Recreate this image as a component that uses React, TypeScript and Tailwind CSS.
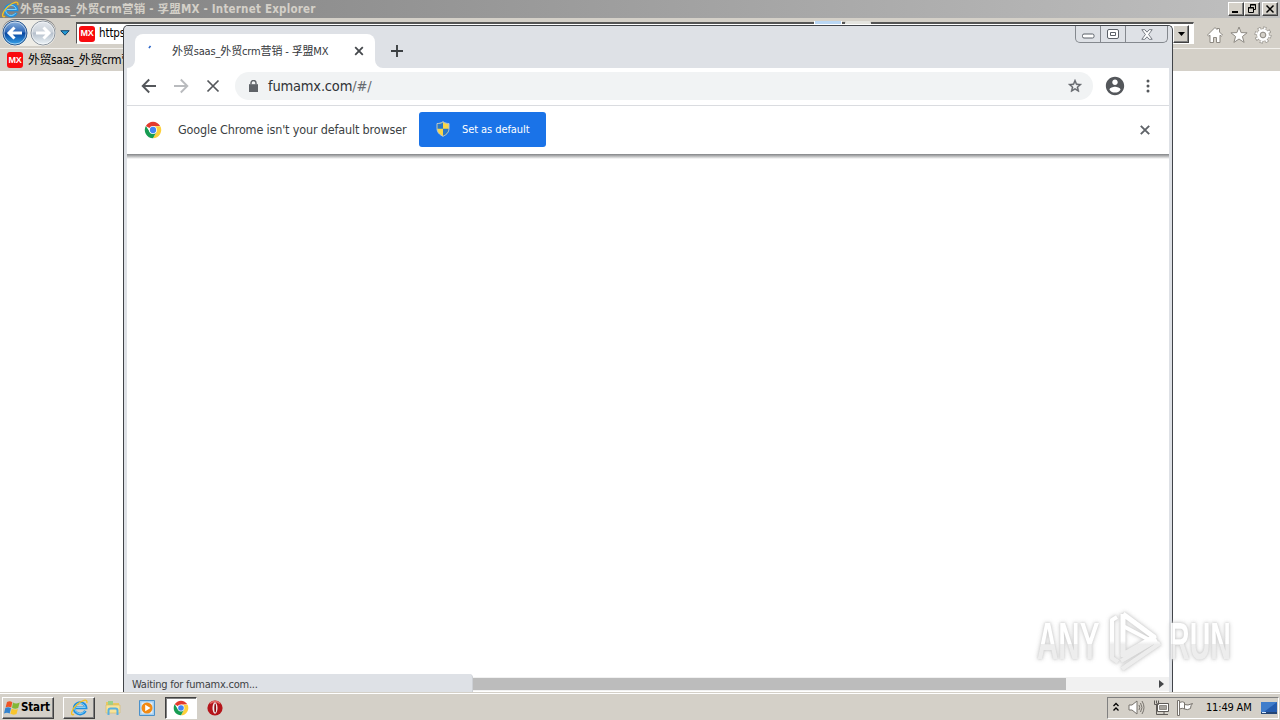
import type { ReactNode } from 'react';

const UI_FONT = "font-['DejaVu_Sans_Condensed','DejaVu_Sans','Noto_Sans_CJK_SC',sans-serif]";

function IeLogo({ className }: { className: string }) {
  return (
    <svg className={className} viewBox="0 0 20 20" fill="none">
      <path d="M17 14a7 6.700 0 1 1 .7-3.500H5.500" stroke="#1e8fe0" strokeWidth="3.200" />
      <path d="M16.200 14a6.300 6 0 1 1 .7-4H6" stroke="#8ad6fb" strokeWidth="1.100" />
      <path d="M3.600 18.200C-1.500 20 .5 12.500 6.500 7S19.800-1.300 18.600 4.700" stroke="#f4c022" strokeWidth="1.600" />
    </svg>
  );
}

function ChromeLogo({ className }: { className: string }) {
  return (
    <svg className={className} viewBox="0 0 24 24">
      <path d="M12 12 2.500 6.500A11 11 0 0 1 21.500 6.500L12 7z" fill="#e33b2e" />
      <path d="M12 7h9.800A11 11 0 0 1 12 23l4.500-8.500z" fill="#fdd03b" />
      <path d="M2.500 6.500A11 11 0 0 0 12 23l4.500-8.500-8.800 0z" fill="#179c52" />
      <circle cx="12" cy="12" r="5.200" fill="#fff" />
      <circle cx="12" cy="12" r="4.200" fill="#4285f4" />
    </svg>
  );
}

function MxIcon() {
  return (
    <span className="flex h-4 w-4 shrink-0 items-center justify-center rounded-[3px] bg-[#f90a0e] font-['Liberation_Sans',sans-serif] text-[9px] font-bold leading-none tracking-[-0.3px] text-white">
      MX
    </span>
  );
}

function CaptionButton({ children }: { children: ReactNode }) {
  return (
    <button className="flex h-[14px] w-4 items-center justify-center border border-t-white border-r-[#404040] border-b-[#404040] border-l-white bg-[#d4d0c8] shadow-[inset_-1px_-1px_0_#808080]">
      <svg className="h-3 w-3" viewBox="0 0 12 12" fill="none" stroke="#000">
        {children}
      </svg>
    </button>
  );
}

function NavOrb({ forward = false }: { forward?: boolean }) {
  return (
    <svg className="h-[26px] w-[26px] shrink-0" viewBox="0 0 26 26">
      <defs>
        <linearGradient id={forward ? 'fwd' : 'back'} x1="0" y1="0" x2="0" y2="1">
          <stop offset="0" stopColor={forward ? '#e4e8ee' : '#8fb5df'} />
          <stop offset="0.46" stopColor={forward ? '#cbd2da' : '#2f68b8'} />
          <stop offset="0.5" stopColor={forward ? '#b5bfcb' : '#08459f'} />
          <stop offset="1" stopColor={forward ? '#eff6fa' : '#38a6ec'} />
        </linearGradient>
      </defs>
      <circle cx="13" cy="13" r="12" fill={forward ? 'url(#fwd)' : 'url(#back)'} stroke={forward ? '#8c959f' : '#29578f'} />
      <circle cx="13" cy="13" r="11" fill="none" stroke="#fff" strokeOpacity=".55" />
      <path
        d={forward ? 'M6 13h12M13.500 7.500 19 13l-5.500 5.500' : 'M20 13H8M12.500 7.500 7 13l5.500 5.500'}
        fill="none"
        stroke="#fff"
        strokeWidth="3"
      />
    </svg>
  );
}

function ExplorerWindow() {
  return (
    <div className="h-[692px] bg-white">
      <div className="flex h-[18px] items-center bg-gradient-to-r from-[#808080] to-[#c0c0c0] pl-[2px] pr-[2px]">
        <IeLogo className="h-[17px] w-[17px] shrink-0" />
        <div className="ml-[1px] w-[310px] whitespace-nowrap text-[11.500px] font-bold leading-[18px] tracking-[0.21px] text-[#d4d0c8]">
          外贸saas_外贸crm营销 - 孚盟MX - Internet Explorer
        </div>
        <div className="ml-auto flex">
          <CaptionButton><path d="M2 9h6" strokeWidth="2" /></CaptionButton>
          <CaptionButton>
            <path d="M4.500 4V1.500h5v5H7M4 2h6" />
            <path d="M2.500 4.500h5v5h-5zM2 5h6" />
          </CaptionButton>
          <div className="w-[2px]" />
          <CaptionButton><path d="m2.500 2.500 7 7m0-7-7 7" strokeWidth="1.500" /></CaptionButton>
        </div>
      </div>
      <div className="flex h-[30px] items-center bg-[#d4d0c8] pl-[2px]">
        <div className="flex w-[54px] items-center gap-[2px] rounded-full bg-[#eeece6] shadow-[0_-1px_0_#77777a]">
          <NavOrb />
          <NavOrb forward />
        </div>
        <svg className="ml-1 h-[6px] w-[10px]" viewBox="0 0 10 6">
          <path d="M.8.700h8.400L5 5.200z" fill="#229ad5" stroke="#16456c" />
        </svg>
        <div className="ml-[6px] flex h-[22px] w-[1118px] items-center border border-t-2 border-[#555] border-r-white border-b-white bg-white pl-[2px]">
          <MxIcon />
          <span className="ml-1 w-6 text-[11.500px] leading-none tracking-[-0.1px] text-black">https</span>
          <div className="-mt-[22px] ml-[691px] h-[3px] w-[28px] border-x border-white bg-[#bad7f4]" />
          <div className="-mt-[22px] ml-[3px] h-[3px] w-[26px] rounded-t-[2px] bg-[#e4e4df]" />
          <span className="ml-auto mr-[4px] flex h-[18px] w-4 items-center justify-center border border-t-white border-r-[#404040] border-b-[#404040] border-l-white bg-[#d4d0c8] shadow-[inset_-1px_-1px_0_#808080]">
            <svg className="h-1 w-[7px]" viewBox="0 0 7 4"><path d="M0 0h7L3.500 4z" /></svg>
          </span>
        </div>
        <div className="ml-[12px] mt-1 flex items-center gap-[6px]">
          <svg className="h-[18px] w-[18px]" viewBox="0 0 18 18">
            <path d="M1.500 9 9 1.500l2 2V2.500h2.500V6l3 3-1.200 1.200-1.300-1V16.500h-3.500v-5h-3v5H4V9.200l-1.300 1z" fill="#fff" stroke="#8d8982" />
          </svg>
          <svg className="h-[18px] w-[18px]" viewBox="0 0 18 18">
            <path d="m9 1 2.100 5.600 6 .2-4.700 3.700 1.700 5.900L9 13l-5.100 3.400 1.700-5.900L.900 6.800l6-.2z" fill="#fff" stroke="#8d8982" />
          </svg>
          <svg className="h-[18px] w-[18px]" viewBox="0 0 18 18" fill="none">
            <circle cx="9" cy="9" r="6.900" stroke="#8d8982" strokeWidth="3.200" strokeDasharray="3.000 2.419" />
            <circle cx="9" cy="9" r="5" fill="#fff" stroke="#8d8982" strokeWidth="3" />
            <circle cx="9" cy="9" r="6.700" stroke="#fff" strokeWidth="2.200" strokeDasharray="2.000 3.262" strokeDashoffset="-.5" />
            <circle cx="9" cy="9" r="4.600" stroke="#fff" strokeWidth="2.800" />
            <circle cx="9" cy="9" r="2.800" fill="#d4d0c8" stroke="#8d8982" />
          </svg>
        </div>
      </div>
      <div className="flex h-[23px] items-center border-t border-[#f2f0ec] bg-[#d4d0c8] pl-[7px]">
        <MxIcon />
        <span className="ml-[5px] whitespace-nowrap text-[12px] leading-none tracking-[-0.450px] text-black">外贸saas_外贸crm营销</span>
      </div>
    </div>
  );
}

function TabStrip() {
  return (
    <div className="flex h-[42px] items-end bg-[#dee1e6] pl-px">
      <svg className="h-2 w-2 shrink-0" viewBox="0 0 8 8"><path d="M8 0v8H0a8 8 0 0 0 8-8" fill="#fff" /></svg>
      <div className="flex h-[34px] w-[240px] shrink-0 items-center rounded-t-lg bg-white">
        <svg className="-mt-[8px] ml-[13px] h-1 w-1" viewBox="0 0 4 4"><path d="m1 3.200 1.500-2.400" stroke="#2b65c8" strokeWidth="1.600" /></svg>
        <span className="ml-[20px] w-[176px] whitespace-nowrap text-[11px] leading-none tracking-[-0.15px] text-[#35383c]">
          外贸saas_外贸crm营销 - 孚盟MX
        </span>
        <svg className="ml-[6px] h-[10px] w-[10px] shrink-0" viewBox="0 0 10 10"><path d="m1.200 1.200 7.600 7.600m0-7.600L1.200 8.800" stroke="#45484c" strokeWidth="1.800" /></svg>
      </div>
      <svg className="h-2 w-2 shrink-0" viewBox="0 0 8 8"><path d="M0 0v8h8a8 8 0 0 1-8-8" fill="#fff" /></svg>
      <svg className="mb-[10px] ml-[7px] h-[14px] w-[14px]" viewBox="0 0 14 14"><path d="M7 1v12M1 7h12" stroke="#3c4043" strokeWidth="1.900" /></svg>
      <div className="mr-[2px] ml-auto flex h-[17px] self-start rounded-b-[5px] border border-t-0 border-[#84888e]">
        <span className="flex w-[25px] items-center justify-center border-r border-[#84888e]">
          <svg className="mt-1 h-[6px] w-[13px]" viewBox="0 0 13 6"><rect x=".5" y="1" width="11.500" height="4" rx="1.500" fill="#fff" stroke="#5b6068" /></svg>
        </span>
        <span className="flex w-[25px] items-center justify-center border-r border-[#84888e]">
          <svg className="h-[10px] w-3" viewBox="0 0 12 10" fill="#fff" stroke="#5b6068"><rect x=".5" y=".5" width="11" height="9" rx="1.500" /><path d="M3.500 3.500h5v3h-5z" /></svg>
        </span>
        <span className="flex w-[41px] items-center justify-center">
          <svg className="h-[11px] w-3" viewBox="0 0 12 11"><path d="M.8.700h3L6 3.200 8.200.700h3L7.600 5.500l3.600 4.800h-3L6 7.800l-2.200 2.500h-3l3.600-4.800z" fill="#fff" stroke="#6b7078" strokeWidth=".9" /></svg>
        </span>
      </div>
    </div>
  );
}

function Toolbar() {
  return (
    <div className="flex h-[38px] items-center border-b border-[#dadce0] bg-white pb-px pl-[14px]">
      <svg className="h-4 w-4" viewBox="0 0 16 16" fill="none" stroke="#54575b" strokeWidth="1.900"><path d="M15 8H2M8.200 1.500 1.700 8l6.500 6.500" /></svg>
      <svg className="ml-4 h-4 w-4" viewBox="0 0 16 16" fill="none" stroke="#b9bbbe" strokeWidth="1.900"><path d="M1 8h13M7.800 1.500 14.300 8l-6.500 6.500" /></svg>
      <svg className="ml-4 h-4 w-4" viewBox="0 0 16 16" stroke="#54575b" strokeWidth="1.700"><path d="m2.500 2.500 11 11m0-11-11 11" /></svg>
      <div className="ml-[14px] flex h-7 w-[858px] items-center rounded-full bg-[#f1f3f4] pl-[14px] pr-[10px]">
        <svg className="h-3 w-[9px]" viewBox="0 0 9 12"><path d="M0 4.200h9V12H0z" fill="#5f6368" /><path d="M2 4.500V3a2.500 2.500 0 0 1 5 0v1.500" fill="none" stroke="#5f6368" strokeWidth="1.400" /></svg>
        <span className="ml-[10px] text-[14.500px] leading-none tracking-[-0.18px] text-[#303236]">fumamx.com<span className="text-[#676b70]">/#/</span></span>
        <svg className="ml-auto h-4 w-4" viewBox="0 0 24 24" fill="#5f6368"><path d="M22 9.240l-7.190-.62L12 2 9.190 8.630 2 9.240l5.460 4.730L5.820 21 12 17.270 18.180 21l-1.630-7.030L22 9.240zM12 15.400l-3.760 2.270 1-4.280-3.320-2.880 4.380-.38L12 6.100l1.710 4.040 4.380.38-3.320 2.880 1 4.280L12 15.400z" stroke="#5f6368" strokeWidth=".6" /></svg>
      </div>
      <svg className="ml-[11px] h-[22px] w-[22px]" viewBox="0 0 24 24" fill="#54575b"><path d="M12 2C6.480 2 2 6.480 2 12s4.480 10 10 10 10-4.480 10-10S17.520 2 12 2zm0 3c1.660 0 3 1.340 3 3s-1.340 3-3 3-3-1.340-3-3 1.340-3 3-3zm0 14.200c-2.500 0-4.710-1.280-6-3.220.030-1.990 4-3.080 6-3.080 1.990 0 5.970 1.090 6 3.080-1.290 1.940-3.500 3.220-6 3.220z" /></svg>
      <svg className="ml-[19.500px] h-[14px] w-1" viewBox="0 0 4 14" fill="#54575b"><circle cx="2" cy="2" r="1.500" /><circle cx="2" cy="7" r="1.500" /><circle cx="2" cy="12" r="1.500" /></svg>
    </div>
  );
}

function ShieldIcon() {
  return (
    <svg className="h-4 w-[14px]" viewBox="0 0 14 16">
      <path d="M7 .700C5 2.200 3 2.500 1 2.500v5C1 11.500 4 14 7 15.300c3-1.300 6-3.800 6-7.800v-5c-2 0-4-.3-6-1.800" fill="#f9d648" stroke="#b7c6d4" />
      <path d="M7 1.500v6.300H1.500V3C3.500 3 5.300 2.500 7 1.500M7 7.800h5.500c0 3.500-2.700 5.800-5.500 7z" fill="#2878c9" />
    </svg>
  );
}

function ChromeWindow() {
  return (
    <div className="absolute left-[123px] top-[25px] flex h-[667px] w-[1050px] flex-col rounded-t-[5px] border border-b-0 border-[#414449] bg-[#dee1e6] px-[2px]">
      <TabStrip />
      <div className="mx-px flex grow flex-col bg-white">
        <Toolbar />
        <div className="flex h-[48px] items-center pl-[17px]">
          <ChromeLogo className="h-[18px] w-[18px]" />
          <span className="ml-4 w-[228px] whitespace-nowrap text-[12.500px] leading-none tracking-[-0.165px] text-[#3c3f43]">
            Google Chrome isn't your default browser
          </span>
          <button className="mb-[2px] ml-[13px] flex h-[35px] w-[127px] items-center rounded-[3px] bg-[#1a73e8] pl-[17px] text-white">
            <ShieldIcon />
            <span className="ml-3 whitespace-nowrap text-[11px] leading-none tracking-[-0.08px]">Set as default</span>
          </button>
          <svg className="ml-auto mr-[19px] h-[10px] w-[10px]" viewBox="0 0 10 10"><path d="m.8.800 8.400 8.400m0-8.400L.800 9.200" stroke="#5f6368" strokeWidth="1.900" /></svg>
        </div>
        <div className="h-[5px] bg-gradient-to-b from-[#828486] to-white" />
        <div className="flex-1" />
        <div className="flex h-[18px] items-end">
          <div className="flex h-[18px] w-[346px] items-center rounded-tr-[4px] border-r border-[#cdd0d5] bg-[#dee1e6] pl-[5px] pt-[2px] text-[11px] leading-none tracking-[-0.24px] text-[#3c4043]">
            Waiting for fumamx.com...
          </div>
          <div className="mb-px flex h-[14px] flex-1 items-center bg-[#f1f1f1]">
            <div className="h-3 w-[593px] bg-[#bcbcbc]" />
            <svg className="ml-auto mr-[5px] h-2 w-[5px]" viewBox="0 0 5 8"><path d="M0 0v8l5-4z" fill="#45474a" /></svg>
          </div>
        </div>
      </div>
    </div>
  );
}

function Taskbar() {
  return (
    <div className="flex h-7 items-center border-t border-[#d4d0c8] bg-[#d4d0c8] pl-[2px] pr-px pt-[2px] shadow-[inset_0_1px_0_#fff]">
      <button className="flex h-[22px] w-[52px] items-center border border-t-white border-r-[#404040] border-b-[#404040] border-l-white pl-px text-[11.500px] font-bold leading-none tracking-[-0.15px] text-black shadow-[inset_-1px_-1px_0_#808080]">
        <svg className="mr-px h-4 w-4 shrink-0" viewBox="0 0 16 16">
          <path d="M3 2c2-1.200 4-.9 5.300.2L7.200 7.600c-2-1-3.600-1.100-5.600-.2z" fill="#ee5425" />
          <path d="M9 2.500c2 1.200 3.900 1.200 6.700 0l-1.500 5.600c-2.200.9-4.200.8-6.200-.3z" fill="#83b735" />
          <path d="M1.300 8c2-1 3.900-.9 5.700.2l-1.300 5.300C3.800 12.500 2.200 12.500 0 13.500z" fill="#3483ce" />
          <path d="M7.700 8.600c2 1.100 3.900 1.200 6.200.3l-1.400 5c-2.300 1.100-4.100.900-6.100-.1z" fill="#f8c52d" />
        </svg>
        Start
      </button>
      <div className="ml-[9px] flex h-[22px] w-8 items-center justify-center border border-t-white border-r-[#404040] border-b-[#404040] border-l-white shadow-[inset_-1px_-1px_0_#808080]">
        <IeLogo className="h-[17px] w-[17px]" />
      </div>
      <svg className="ml-[10px] h-4 w-4" viewBox="0 0 16 16">
        <path d="M1 2h5l1 1h7v9H1z" fill="#e9c861" /><path d="M3 1h5v4H3z" fill="#9bd18b" />
        <path d="M1 5h14v8H1z" fill="#f7e39a" stroke="#d6b95e" strokeWidth=".6" />
        <path d="M3.500 15v-4.500q0-2 2-2h5q2 0 2 2V15" fill="none" stroke="#57afe0" strokeWidth="2" />
      </svg>
      <svg className="ml-[18px] h-4 w-4" viewBox="0 0 16 16">
        <path d="M.5.500h15v15H.500z" fill="#a6cff0" stroke="#4b91ca" /><path d="M2.500 2.500h11v11h-11z" fill="#e5f1fa" />
        <circle cx="8" cy="8" r="5.500" fill="#f28a13" /><path d="M6.200 4.700v6.600L11.500 8z" fill="#fff" />
      </svg>
      <div className="ml-[10px] flex h-[22px] w-8 items-center justify-center border border-t-[#404040] border-r-white border-b-white border-l-[#404040] bg-white shadow-[inset_1px_1px_0_#808080]">
        <ChromeLogo className="h-4 w-4" />
      </div>
      <svg className="ml-[10px] h-4 w-4" viewBox="0 0 16 16">
        <circle cx="8" cy="8" r="7.600" fill="#b5151b" /><path d="M3 3.500a7 7 0 0 1 10 0" fill="none" stroke="#e56d68" strokeWidth="1.500" />
        <ellipse cx="8" cy="8" rx="2.500" ry="5.800" fill="#f4eeee" /><ellipse cx="8.200" cy="8" rx=".9" ry="4.600" fill="#86090d" />
      </svg>
      <div className="ml-auto flex h-[22px] w-[172px] items-center border border-t-[#808080] border-r-white border-b-white border-l-[#808080] pl-[5px]">
        <svg className="mb-[2px] h-[10px] w-[6px]" viewBox="0 0 6 10" fill="none" stroke="#000" strokeWidth="1.300"><path d="m.5 4 2.500-2.500L5.500 4m-5 4.500L3 6l2.500 2.500" /></svg>
        <svg className="ml-[9px] h-[15px] w-[17px]" viewBox="0 0 17 15" fill="none" stroke="#77736d">
          <path d="M1 5h3l5-4v13l-5-4H1z" fill="#fff" /><path d="M11 5q1.500 2.500 0 5m1.500-7q3 4.500 0 9M14 1q4 6.500 0 13" />
        </svg>
        <svg className="ml-[8px] h-4 w-4" viewBox="0 0 16 16" stroke="#5d5a56">
          <path d="M4.500 3.500h11v8h-11z" fill="#fff" /><path d="M6.500 5.500h7v4h-7z" fill="#a5a29c" stroke="#8e8b85" />
          <path d="M7 14.500h8M11 12v2M1.500.500v4h4v-4M3.500.500v3M3.500 5v9.500H8" fill="none" />
        </svg>
        <svg className="ml-[8px] h-4 w-4" viewBox="0 0 16 16" fill="#fff" stroke="#77736d">
          <path d="M.5.500h2v15h-2zM2.500 2.500q3-1.500 5 0V9q-2-1.500-5 0z" /><path d="M7.500 4.500q3 1.500 8-1-2 2-2 5-3 2-6 .5z" />
        </svg>
        <span className="ml-[13px] whitespace-nowrap text-[11px] leading-none tracking-[-0.18px] text-black">11:49 AM</span>
        <svg className="ml-auto mr-px h-3 w-4 shrink-0" viewBox="0 0 16 12">
          <path d="M0 0h16v12H0z" fill="#245cae" /><path d="M0 0h16L3 10H0z" fill="#3f7dcb" /><path d="M0 10h16v2H0z" fill="#234575" /><path d="M1 10.500h4" stroke="#d7eaff" />
        </svg>
      </div>
    </div>
  );
}

function Watermark() {
  return (
    <div className="absolute left-[1037px] top-[608px] flex h-[66px] w-[198px] items-center font-['Liberation_Sans_Narrow','Liberation_Sans',sans-serif] text-[51px] font-bold leading-none text-transparent opacity-90 [filter:drop-shadow(0_0_1px_#ccc)_drop-shadow(0_0_2px_#ccc)]">
      <span className="flex w-[68px]">
        <span className="origin-left scale-x-[0.58] bg-gradient-to-b from-white from-55% to-[#ececec] to-55% bg-clip-text">ANY</span>
      </span>
      <svg className="h-[66px] w-[62px] shrink-0" viewBox="0 0 62 66" fill="none" stroke="#fff" strokeWidth="5">
        <defs>
          <linearGradient id="markFade" gradientUnits="userSpaceOnUse" x1="0" y1="0" x2="0" y2="66">
            <stop offset=".5" stopColor="#fff" />
            <stop offset=".55" stopColor="#ececec" />
          </linearGradient>
        </defs>
        <g stroke="url(#markFade)" strokeLinejoin="round">
          <path d="M18 6v41l31-18L18 6" />
          <path d="M18 18l34 18M17 61l38-26M16 53l36-21" strokeWidth="4" />
          <path d="M12 9 7 12v38l6 4" strokeWidth="4" />
        </g>
      </svg>
      <span className="ml-[2px] flex w-[64px]">
        <span className="origin-left scale-x-[0.56] bg-gradient-to-b from-white from-55% to-[#ececec] to-55% bg-clip-text">RUN</span>
      </span>
    </div>
  );
}

export default function App() {
  return (
    <div className={`relative h-[720px] w-[1280px] overflow-hidden bg-white ${UI_FONT}`}>
      <ExplorerWindow />
      <ChromeWindow />
      <Taskbar />
      <Watermark />
    </div>
  );
}
